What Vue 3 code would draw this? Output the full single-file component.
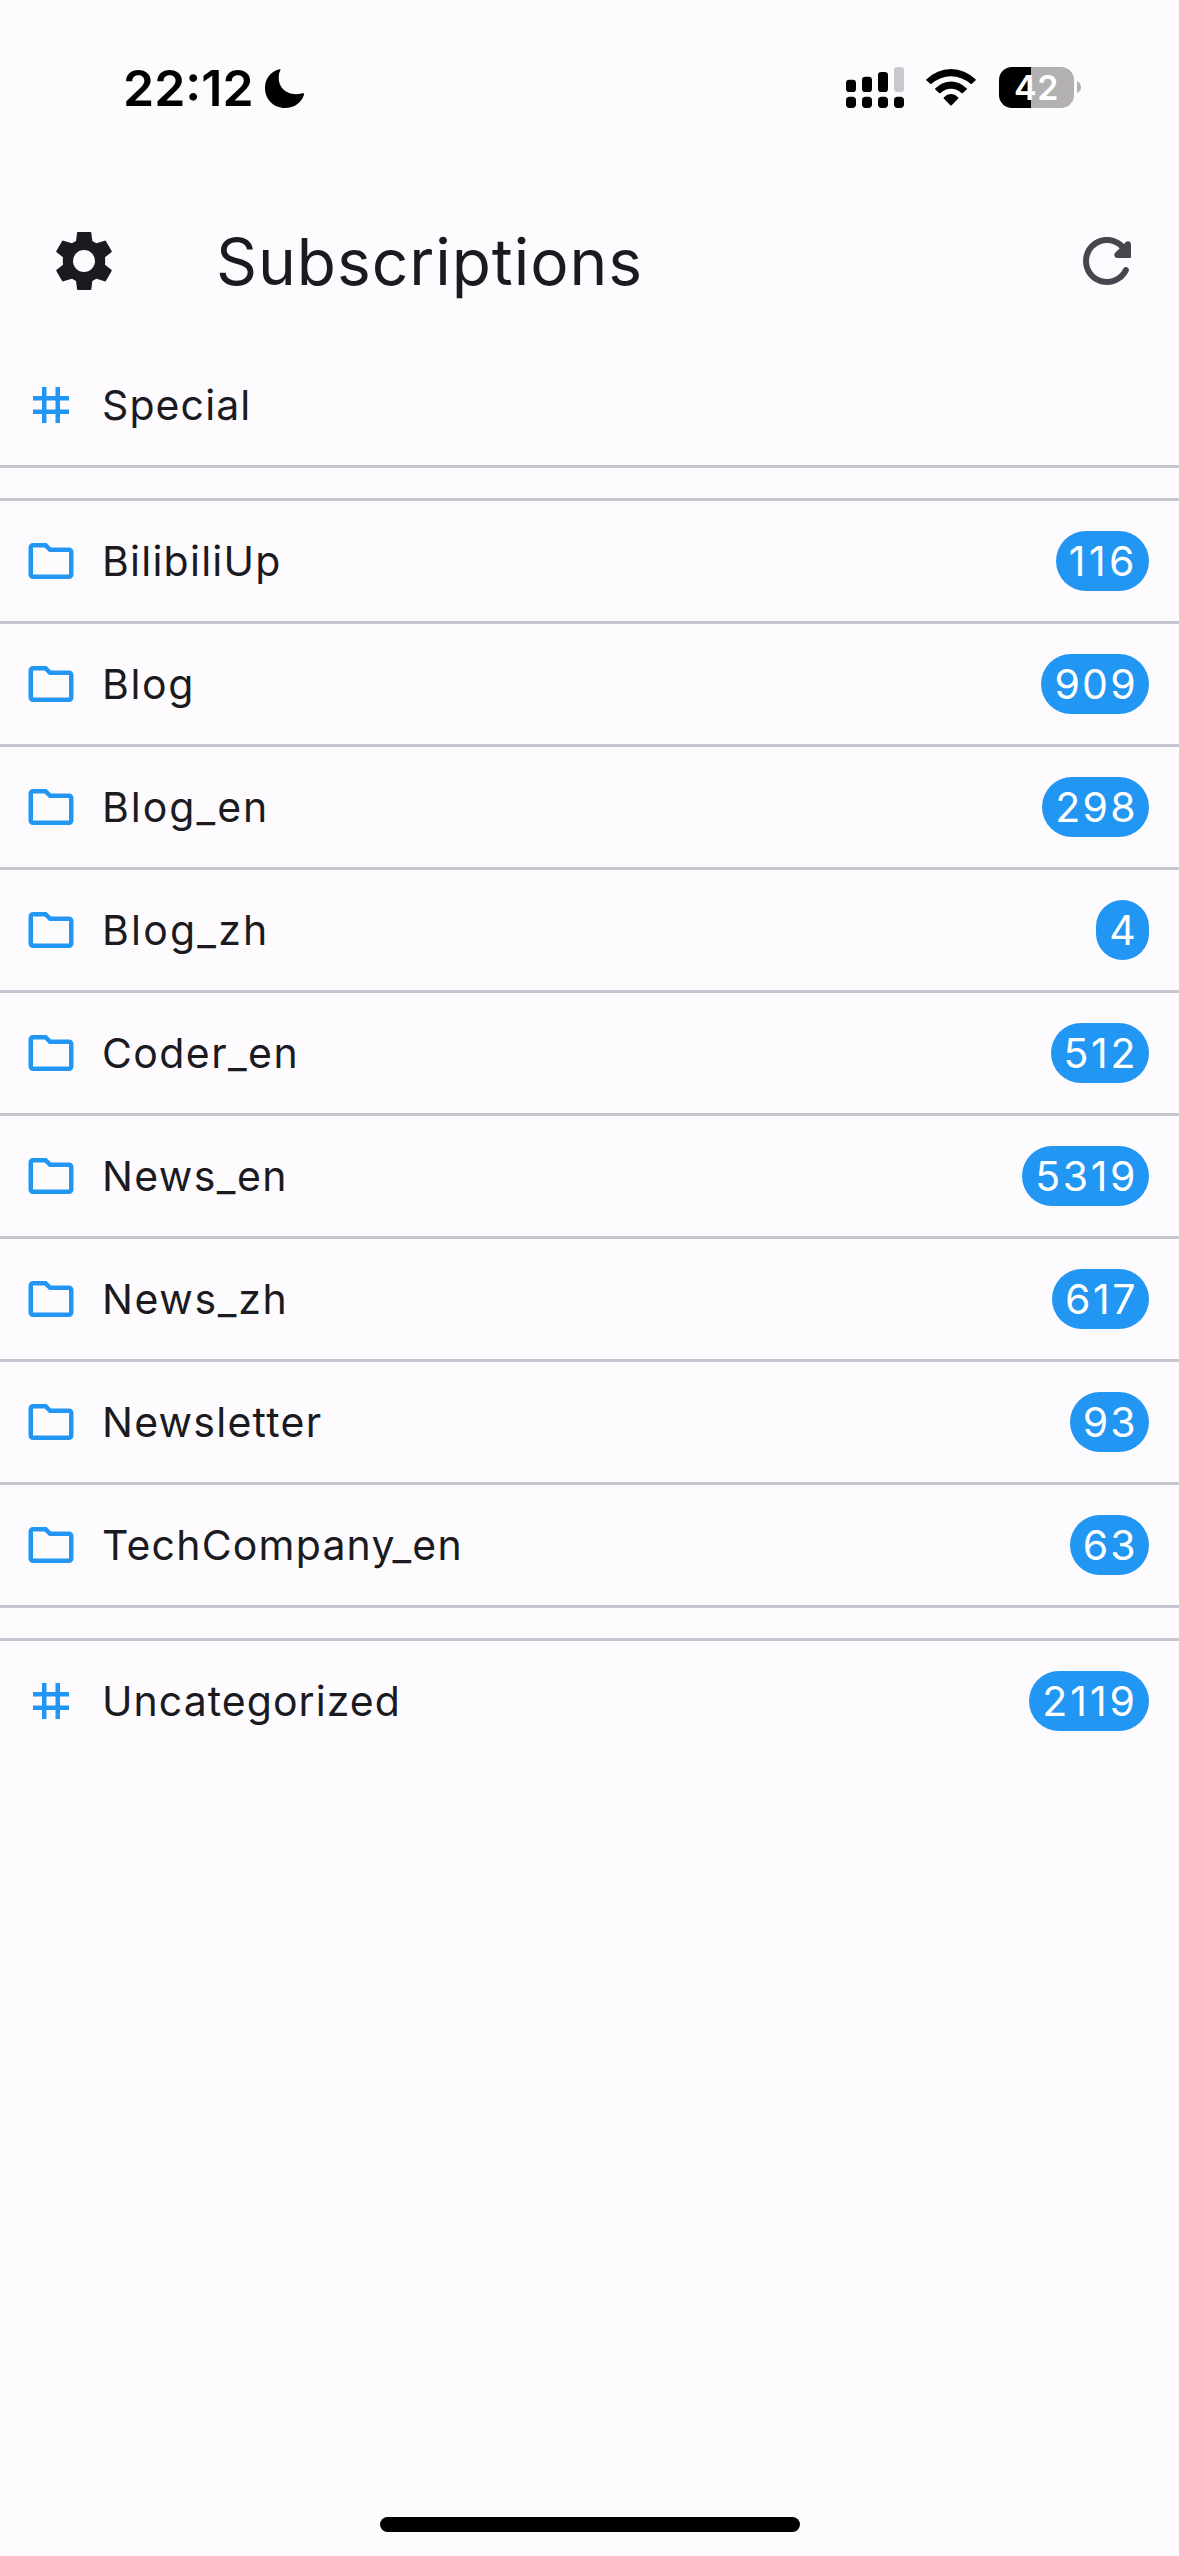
<script setup>
// `track` and `countTrack` are the letter spacing of a label and of its count,
// in pixels, where they differ from the default
const groups = [
  [{ name: 'Special', icon: 'tag', track: 1.1 }],
  [
    { name: 'BilibiliUp', icon: 'folder', count: 116, countTrack: 3.5 },
    { name: 'Blog', icon: 'folder', count: 909, track: 1.6 },
    { name: 'Blog_en', icon: 'folder', count: 298, track: 2 },
    { name: 'Blog_zh', icon: 'folder', count: 4, track: 2.2 },
    { name: 'Coder_en', icon: 'folder', count: 512, track: 1.4, countTrack: 2.6 },
    { name: 'News_en', icon: 'folder', count: 5319, track: 1.4, countTrack: 2.6 },
    { name: 'News_zh', icon: 'folder', count: 617, track: 1.65, countTrack: 2.6 },
    { name: 'Newsletter', icon: 'folder', count: 93 },
    { name: 'TechCompany_en', icon: 'folder', count: 63, track: 1.2 },
  ],
  [{ name: 'Uncategorized', icon: 'tag', count: 2119, track: 1.05, countTrack: 3 }],
]

const spacing = (px) => (px ? { letterSpacing: px + 'px' } : null)

const icons = {
  tag: 'M20 10V8h-4V4h-2v4h-4V4H8v4H4v2h4v4H4v2h4v4h2v-4h4v4h2v-4h4v-2h-4v-4h4zm-6 4h-4v-4h4v4z',
  folder: 'M9.17 6l2 2H20v10H4V6h5.17M10 4H4c-1.1 0-1.99.9-1.99 2L2 18c0 1.1.9 2 2 2h16c1.1 0 2-.9 2-2V8c0-1.1-.9-2-2-2h-8l-2-2z',
}
</script>

<template>
  <div class="screen">
    <div class="status">
      <span class="time">22:12</span>
      <svg class="moon" viewBox="0 0 117 117">
        <path d="M46 0C17 6 0 29 0 57C0 91 26 117 60 117C88 117 110 100 117 77C118 73 115 72 112 73C74 84 35 61 42 16C43 10 45 7 46 4Q47 0 46 0Z" />
      </svg>
      <svg class="signal" viewBox="0 0 174 123">
        <rect x="0" y="38" width="30" height="37" rx="10" />
        <rect x="48" y="29" width="30" height="46" rx="10" />
        <rect x="96" y="15" width="30" height="60" rx="10" />
        <rect x="144" y="0" width="30" height="75" rx="10" fill="#cac8cc" />
        <rect v-for="i in 4" :key="i" :x="(i - 1) * 48" y="89" width="30" height="34" rx="11" />
      </svg>
      <svg class="wifi" viewBox="0 0 150 112">
        <path d="M0 32Q33 0 75 0Q117 0 150 32Q151 33 150 34L138 45Q136 46 134 45Q107 22 75 22Q43 22 16 45Q14 46 12 45L0 34Q-1 33 0 32Z" />
        <path d="M27 59Q49 38 75 38Q101 38 123 59Q124 60 123 61L111 73Q109 74 107 73Q92 60 75 60Q58 60 43 73Q41 74 39 73L27 61Q26 60 27 59Z" />
        <path d="M53 86Q63 76 75 76Q87 76 97 86Q98 88 97 89L77 110Q75 112 73 110L53 89Q52 88 53 86Z" />
      </svg>
      <div class="battery"><span>42</span></div>
      <svg class="nub" viewBox="0 0 13 40"><path d="M0 0Q13 6 13 19Q13 32 0 38Z" /></svg>
    </div>

    <header class="bar">
      <svg class="gear" viewBox="0 0 168 174">
        <path fill-rule="evenodd" d="M66 0H103Q106 0 106 3L109 27L121 34L146 26Q149 25 150 28L167 57Q168 60 166 61L147 76Q148 87 147 98L166 113Q168 114 167 117L150 146Q149 149 146 148L121 140L109 147L106 171Q106 174 103 174H66Q63 174 63 171L60 147L48 140L22 148Q19 149 18 146L1 117Q0 114 2 113L21 98Q20 87 21 76L2 61Q0 60 1 57L18 28Q19 25 22 26L48 34L60 27L63 3Q63 0 66 0ZM84 54A33 33 0 1 0 84 120A33 33 0 1 0 84 54Z" />
      </svg>
      <h1>Subscriptions</h1>
      <svg class="refresh" viewBox="0 0 24 24">
        <path d="M17.65 6.35c-1.63-1.63-3.94-2.57-6.48-2.31-3.67.37-6.69 3.35-7.1 7.02C3.52 15.91 7.27 20 12 20c3.19 0 5.93-1.87 7.21-4.56.32-.67-.16-1.44-.9-1.44-.37 0-.72.2-.88.53-1.13 2.43-3.84 3.97-6.8 3.31-2.22-.49-4.01-2.3-4.48-4.52C5.31 9.44 8.26 6 12 6c1.66 0 3.14.69 4.22 1.78l-1.51 1.51c-.63.63-.19 1.71.7 1.71H19.6c.25 0 .4-.15.4-.4V6.41c0-.89-1.08-1.34-1.71-.71l-.64.65z" />
      </svg>
    </header>

    <main>
      <ul v-for="(group, g) in groups" :key="g" class="group">
        <li v-for="item in group" :key="item.name" class="row">
          <svg class="icon" viewBox="0 0 24 24"><path :d="icons[item.icon]" /></svg>
          <span class="label" :style="spacing(item.track)">{{ item.name }}</span>
          <span v-if="item.count" class="badge" :style="spacing(item.countTrack)">{{ item.count }}</span>
        </li>
      </ul>
    </main>

    <div class="home"></div>
  </div>
</template>

<style>
body {
  margin: 0;
  background: #fefbff;
}
</style>

<style scoped>
.screen {
  display: flex;
  flex-direction: column;
  width: 1179px;
  height: 2556px;
  overflow: hidden;
  background: #fefbff;
  color: #1b1b1f;
  font-family: Inter, "Liberation Sans", sans-serif;
}
svg {
  display: block;
  flex: none;
  overflow: visible;
}
.status {
  box-sizing: border-box;
  display: flex;
  align-items: center;
  height: 175px;
  padding: 0 98px 0 123px;
  color: #000;
}
.time {
  width: 142px;
  font-size: 50px;
  font-weight: 600;
  line-height: 60px;
  white-space: nowrap;
}
.moon {
  width: 39px;
  height: 39px;
  margin-top: 2px;
}
.signal {
  width: 58px;
  height: 41px;
  margin-left: auto;
}
.wifi {
  width: 50px;
  height: 37px;
  margin: 0 23px 0 22px;
}
.battery {
  display: flex;
  align-items: center;
  justify-content: center;
  width: 75px;
  height: 41px;
  border-radius: 13px;
  background: linear-gradient(90deg, #000 32px, #b2b0b3 32px);
  color: #fff;
  font-size: 34px;
  font-weight: 600;
  line-height: 41px;
  letter-spacing: 0.5px;
}
.nub {
  width: 4px;
  height: 13px;
  margin-left: 3px;
  fill: #b2b0b3;
}
.bar {
  box-sizing: border-box;
  display: flex;
  align-items: center;
  height: 170px;
  padding: 2px 36px 0 56px;
}
.gear {
  width: 56px;
  height: 58px;
  fill: #1b1b1f;
}
h1 {
  flex: 1;
  margin: 1px 0 0 104px;
  font-size: 64px;
  font-weight: 400;
  line-height: 84px;
  letter-spacing: 0.95px;
}
.refresh {
  width: 72px;
  height: 72px;
  fill: #46464f;
}
.group {
  margin: 0;
  padding: 0;
  list-style: none;
}
.group + .group {
  margin-top: 30px;
  border-top: 3px solid #c7c5d0;
}
.row {
  box-sizing: border-box;
  display: flex;
  align-items: center;
  height: 123px;
  padding: 0 30px 0 24px;
  border-bottom: 3px solid #c7c5d0;
}
.group:last-child .row {
  border-bottom-color: transparent;
}
.icon {
  width: 54px;
  height: 54px;
  fill: #2196f3;
}
.label {
  margin-left: 24px;
  font-size: 41px;
  line-height: 60px;
  letter-spacing: 1.25px;
}
.badge {
  margin-left: auto;
  padding: 0 11px 0 13px;
  border-radius: 30px;
  background: #2196f3;
  color: #fff;
  font-size: 41px;
  font-weight: 400;
  line-height: 60px;
  letter-spacing: 2.3px;
}
.home {
  width: 420px;
  height: 15px;
  margin: auto auto 24px;
  border-radius: 8px;
  background: #000;
}
</style>
